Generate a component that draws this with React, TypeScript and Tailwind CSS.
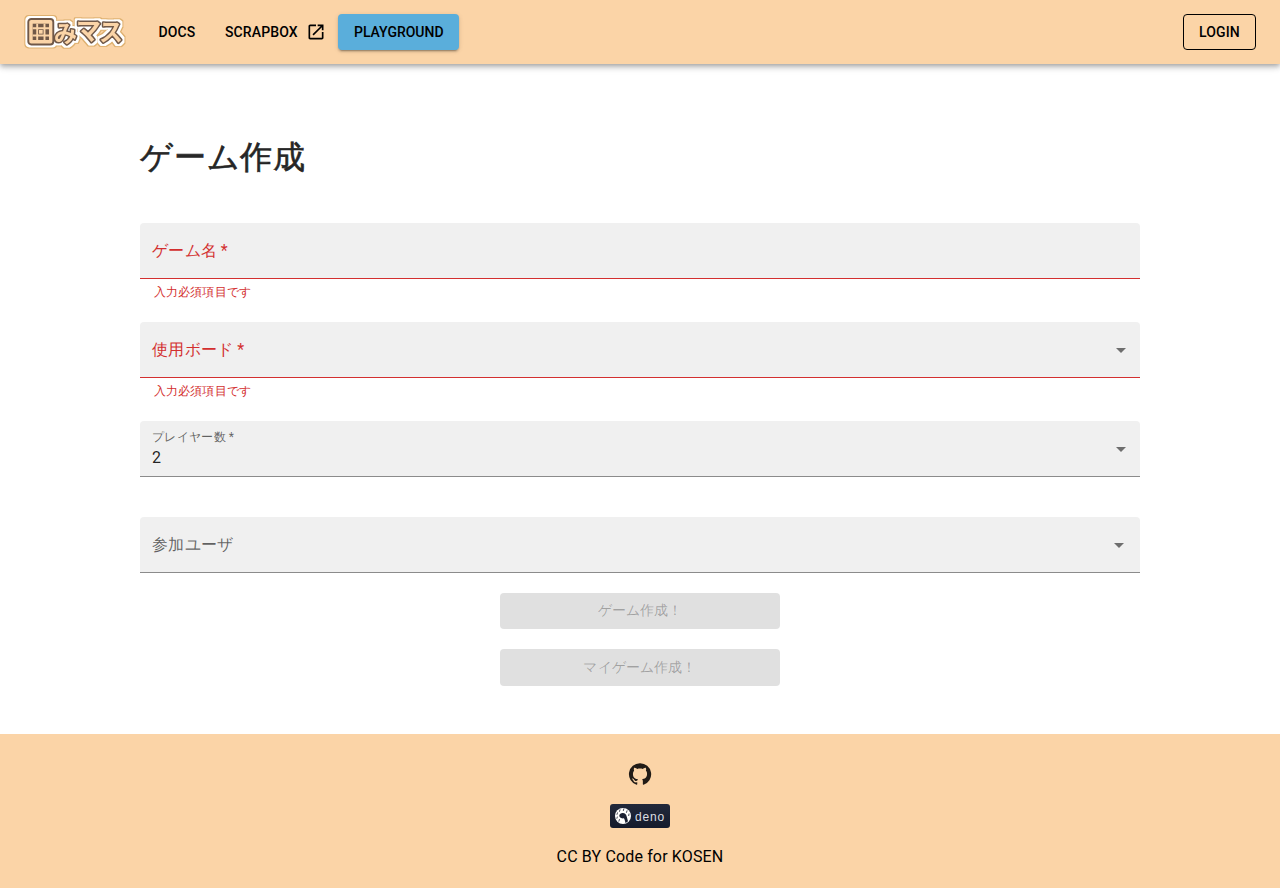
import React from "react";

const GITHUB_PATH =
  "M12 1.27a11 11 0 00-3.48 21.46c.55.09.73-.28.73-.55v-1.84c-3.03.64-3.67-1.46-3.67-1.46-.55-1.29-1.28-1.65-1.28-1.65-.92-.65.1-.65.1-.65 1.1 0 1.73 1.1 1.73 1.1.92 1.65 2.57 1.2 3.21.92a2 2 0 01.64-1.47c-2.47-.27-5.04-1.19-5.04-5.5 0-1.1.46-2.1 1.2-2.84a3.76 3.76 0 010-2.93s.91-.28 3.11 1.1c1.8-.49 3.7-.49 5.5 0 2.1-1.38 3.02-1.1 3.02-1.1a3.76 3.76 0 01.1 2.93c.83.74 1.2 1.74 1.2 2.94 0 4.21-2.57 5.13-5.04 5.4.45.37.82.92.82 2.02v3.03c0 .27.1.64.73.55A11 11 0 0012 1.27";

function Logo() {
  return (
    <svg width="101" height="34" viewBox="0 0 101 34" className="block overflow-visible">
      <defs>
        <filter id="sticker" x="-10%" y="-30%" width="120%" height="160%" colorInterpolationFilters="sRGB">
          <feMorphology in="SourceAlpha" operator="dilate" radius="2" result="inner" />
          <feGaussianBlur in="inner" stdDeviation="0.6" result="innerSoft" />
          <feMorphology in="SourceAlpha" operator="dilate" radius="3" result="outer" />
          <feGaussianBlur in="outer" stdDeviation="0.6" result="outerSoft" />
          <feFlood floodColor="#deb06f" />
          <feComposite in2="outerSoft" operator="in" result="rim" />
          <feFlood floodColor="#ffffff" />
          <feComposite in2="innerSoft" operator="in" result="paper" />
          <feMerge>
            <feMergeNode in="rim" />
            <feMergeNode in="paper" />
            <feMergeNode in="SourceGraphic" />
          </feMerge>
        </filter>
      </defs>
      <g filter="url(#sticker)">
        <rect x="4.3" y="4" width="25" height="25.5" rx="3" fill="#fbd4a7" stroke="#705848" strokeWidth="1.9" />
        <g className="font-['Noto_Sans_CJK_JP',sans-serif] font-bold [paint-order:stroke]" fill="#fbd4a7" stroke="#705848" strokeWidth="3" strokeLinejoin="round">
          <text x="30" y="26.8" fontSize="23">み</text>
          <text x="52" y="25.3" fontSize="25">マ</text>
          <text x="75" y="26.3" fontSize="24">ス</text>
        </g>
      </g>
      <rect x="8.7" y="8.7" width="16.3" height="16.3" fill="#705848" />
      <path d="M8.7 13.2h16.3M8.7 20.5h16.3M13.2 8.7v16.3M20.5 8.7v16.3" stroke="#fbd4a7" strokeWidth="1.9" />
      <rect x="15" y="15" width="3.7" height="3.7" fill="#fbd4a7" />
    </svg>
  );
}

function Arrow() {
  return (
    <svg width="24" height="24" viewBox="0 0 24 24" fill="rgba(0,0,0,0.54)">
      <path d="M7 10l5 5 5-5z" />
    </svg>
  );
}

function ErrorText() {
  return <p className="mt-[3px] h-5 px-[14px] text-xs leading-[20px] tracking-[0.01em] text-[#d32f2f]">入力必須項目です</p>;
}

function DenoBadge() {
  return (
    <div className="flex h-6 w-[60px] items-center rounded-[3px] bg-linear-to-b from-[#22293b] to-[#151b2c] pl-[5px]">
      <svg width="16" height="16" viewBox="0 0 16 16">
        <circle cx="8" cy="8" r="8" fill="#fff" />
        <path d="M4.3 7.6C4.4 5.9 6 4.8 7.8 4.9c2.2.1 3.4 1.4 3.9 3.6l1.3 4.8c-.8.8-1.6 1.3-2.6 1.6-.3-1.8-.6-3.2-1.5-4.6-.9.2-1.9.1-2.8-.2-1.2-.5-1.9-1.2-1.8-2.5z" fill="#1b2133" />
        <path d="M5 1.8l-.5 1.6M8.8.9l-.4 1.6M12 2.8l-.5 1.6M2.5 4.8L2 6.4M14 6l-.3 1.6M2.3 9l-.4 1.3M4.4 11.5l-.5 1.7" stroke="#1b2133" strokeWidth=".8" strokeLinecap="round" />
      </svg>
      <span className="ml-1 pt-px font-['Liberation_Sans',sans-serif] text-[12px] leading-6 tracking-[0.8px] text-[#dcdee2]">deno</span>
    </div>
  );
}

export default function App() {
  return (
    <div lang="ja" className="flex min-h-[888px] flex-col bg-white font-[Roboto,sans-serif] text-base tracking-[0.00938em] text-black/87">
      <header className="relative flex h-16 items-center bg-[#fbd4a7] px-6 text-sm leading-[24.5px] font-medium tracking-[0.1px] text-black shadow-[0px_2px_4px_-1px_rgba(0,0,0,0.2),0px_4px_5px_0px_rgba(0,0,0,0.14),0px_1px_10px_0px_rgba(0,0,0,0.12)]">
        <Logo />
        <nav className="ml-5 flex items-center gap-2">
          <a className="flex h-9 w-16 items-center justify-center">DOCS</a>
          <a className="flex h-9 w-[113px] items-center px-2 tracking-[0.12px]">
            SCRAPBOX
            <svg className="-mr-1 ml-auto shrink-0" width="20" height="20" viewBox="0 0 24 24" fill="currentColor">
              <path d="M19 19H5V5h7V3H5c-1.11 0-2 .9-2 2v14c0 1.1.89 2 2 2h14c1.1 0 2-.9 2-2v-7h-2v7zM14 3v2h3.59l-9.83 9.83 1.41 1.41L19 6.41V10h2V3h-7z" />
            </svg>
          </a>
          <a className="flex h-9 w-[121px] items-center rounded bg-[#5aaedb] px-4 tracking-[-0.02px] shadow-[0px_3px_1px_-2px_rgba(0,0,0,0.2),0px_2px_2px_0px_rgba(0,0,0,0.14),0px_1px_5px_0px_rgba(0,0,0,0.12)]">PLAYGROUND</a>
        </nav>
        <button className="ml-auto flex h-9 w-[73px] items-center rounded border border-black px-[15px] tracking-[0.15px]">LOGIN</button>
      </header>

      <main className="mx-auto flex w-[1000px] flex-col pt-[69px]">
        <h1 className="h-12 text-[32px] leading-[48px] font-medium tracking-[0.75px] [-webkit-text-stroke:0.6px_#212121]">ゲーム作成</h1>

        <div className="mt-[42px] flex h-14 items-center rounded-t border-b border-[#d32f2f] bg-[#f0f0f0] px-3 tracking-[0.32px] text-[#d32f2f]">{"ゲーム名\u2009*"}</div>
        <ErrorText />

        <div className="mt-5 flex h-14 items-center justify-between rounded-t border-b border-[#d32f2f] bg-[#f0f0f0] pr-[7px] pl-3 tracking-[0.32px] text-[#d32f2f]">
          {"使用ボード\u2009*"}
          <Arrow />
        </div>
        <ErrorText />

        <div className="mt-5 flex h-14 items-center justify-between rounded-t border-b border-[#8b8b8b] bg-[#f0f0f0] pr-[7px] pl-3">
          <div className="flex h-full flex-col pt-[7px]">
            <span className="h-[18px] text-xs leading-[18px] tracking-[0.32px] text-black/60">{"プレイヤー数\u2009*"}</span>
            <span className="h-[23px] leading-[23px]">2</span>
          </div>
          <Arrow />
        </div>

        <div className="mt-10 flex h-14 items-center justify-between rounded-t border-b border-[#8b8b8b] bg-[#f0f0f0] pr-[9px] pl-3">
          <span className="tracking-[0.32px] text-black/60">参加ユーザ</span>
          <Arrow />
        </div>

        <div className="mt-5 flex flex-col items-center gap-5 text-sm leading-[24.5px] font-medium tracking-[0.15px] text-black/28">
          <div className="flex h-9 w-[280px] items-center justify-center rounded bg-[#e0e0e0] pb-px">ゲーム作成！</div>
          <div className="flex h-[37px] w-[280px] items-center justify-center rounded bg-[#e0e0e0]">マイゲーム作成！</div>
        </div>
      </main>

      <footer className="mt-12 flex h-[154px] flex-col items-center bg-[#fbd4a7] pt-7 text-black">
        <svg width="24" height="24" viewBox="0 0 24 24" fill="#211b16">
          <path d={GITHUB_PATH} />
        </svg>
        <div className="mt-[18px]">
          <DenoBadge />
        </div>
        <p className="mt-[17px] leading-6">CC BY Code for KOSEN</p>
      </footer>
    </div>
  );
}
